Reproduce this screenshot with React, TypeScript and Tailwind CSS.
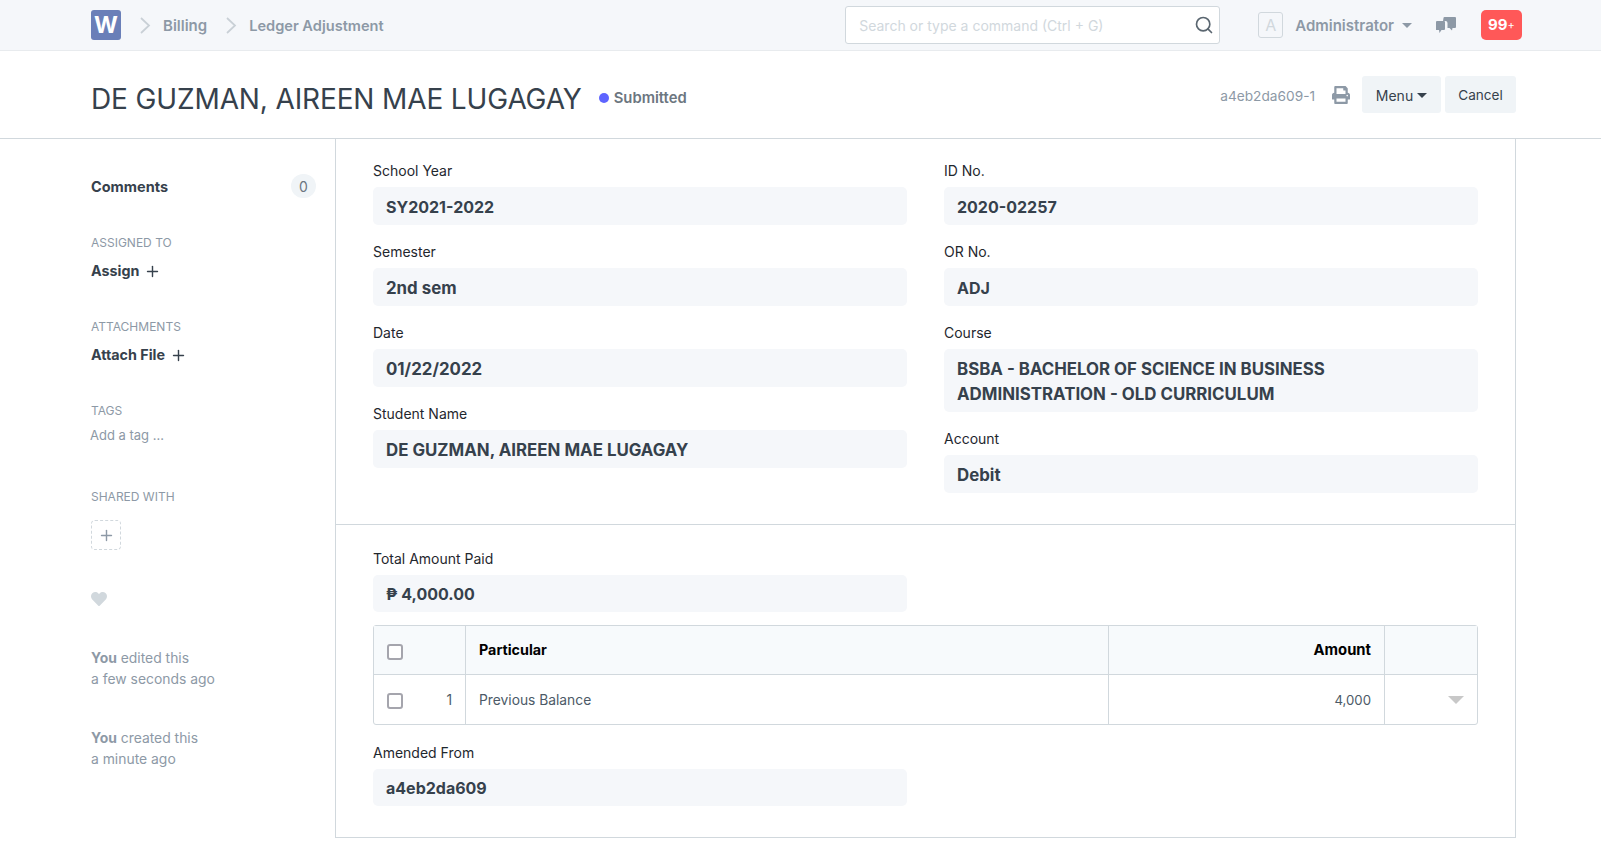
import React from 'react';
import { Search, Plus } from 'lucide-react';
import { FaPrint, FaHeart } from 'react-icons/fa';

const Field = ({ label, value, tall, long, short }: { label: string; value: React.ReactNode; tall?: boolean; long?: boolean; short?: boolean }) => (
  <div className="mb-[17px]">
    <div className="h-[20px] mb-[6px] text-[14px] leading-[20px] text-[#1f272e]">{label}</div>
    <div className={`bg-[#f5f7fa] rounded-[5px] px-[13px] font-bold text-[#36414c] ${long ? 'text-[16.85px]' : 'text-[16px]'} ${tall ? 'pt-[8px] pb-[5px] leading-[25px]' : short ? 'h-[37px] leading-[39px]' : 'h-[38px] leading-[40px]'}`}>
      {value}
    </div>
  </div>
);

const SideLabel = ({ children }: { children: React.ReactNode }) => (
  <div className="text-[12px] leading-[16px] text-[#8d99a6]">{children}</div>
);

const Check = () => <span className="block mt-[3px] w-[16px] h-[16px] rounded-[3px] border-2 border-[#a5a5ad] bg-white" />;

const Chevron = () => (
  <svg width="11" height="17" viewBox="0 0 11 17" className="ml-[19px]" fill="none" stroke="#c9d0d6" strokeWidth="1.75">
    <path d="M1 1l8 7.5-8 7.5" />
  </svg>
);

// two square speech bubbles, the desk's chat icon
const ChatIcon = () => (
  <svg width="20" height="16" viewBox="0 0 20 16" className="ml-[24px]" fill="#8d99a6">
    <path d="M7.5 1a1 1 0 0 1 1-1h10.5a1 1 0 0 1 1 1v9a1 1 0 0 1-1 1h-2.5l-.5 2.5-2.5-2.5h-2v-5a2 2 0 0 0-2-2h-2.5z" />
    <path d="M0 5a1 1 0 0 1 1-1h7a1 1 0 0 1 1 1v7a1 1 0 0 1-1 1h-2.5l-2 3-.5-3h-2.5a1 1 0 0 1-1-1z" />
  </svg>
);

export default function App() {
  return (
    <div className="min-h-[857px] bg-white font-['Inter',sans-serif] text-[#36414c]">
      {/* navbar */}
      <div className="h-[51px] bg-[#f5f7fa] border-b border-[#e8ebee] flex items-center pl-[91px] pr-[79px]">
        <div className="w-[30px] h-[30px] rounded-[3px] bg-[#6a7fb8] text-white text-[23px] font-bold flex items-center justify-center">W</div>
        <Chevron />
        <span className="ml-[12px] mt-[2px] text-[15px] font-semibold text-[#8d99a6]">Billing</span>
        <Chevron />
        <span className="ml-[12px] mt-[3px] text-[14.6px] font-semibold text-[#8d99a6]">Ledger Adjustment</span>
        <div className="ml-auto w-[375px] h-[38px] bg-white border border-[#d1d8dd] rounded-[3px] flex items-center pl-[13px] pr-[5px]">
          <span className="text-[14px] text-[#d1d8dd]">Search or type a command (Ctrl + G)</span>
          <Search size={20} className="ml-auto text-[#5a6670]" strokeWidth={2} />
        </div>
        <div className="ml-[38px] w-[25px] h-[26px] border border-[#d1d8dd] rounded-[3px] flex items-center justify-center text-[16px] text-[#d1d8dd]">A</div>
        <span className="ml-[12px] mt-[3px] text-[15px] font-semibold text-[#8d99a6]">Administrator</span>
        <span className="ml-[8px] w-0 h-0 border-x-[5px] border-x-transparent border-t-[5px] border-t-[#8d99a6]" />
        <ChatIcon />
        <div className="ml-[25px] w-[41px] h-[30px] rounded-[5px] bg-[#ff5858] text-white text-[15px] font-bold flex items-center justify-center">99<span className="text-[11px] font-normal">+</span></div>
      </div>

      {/* page head */}
      <div className="h-[88px] border-b border-[#d1d8dd] flex items-center pl-[91px] pr-[85px]">
        <h1 className="pt-[8px] text-[28px] font-normal text-[#36414c] tracking-[-0.13px]">DE GUZMAN, AIREEN MAE LUGAGAY</h1>
        <span className="ml-[17px] mt-[6px] w-[10px] h-[10px] rounded-full bg-[#5e64ff]" />
        <span className="ml-[5px] mt-[8px] text-[14.8px] font-semibold text-[#6c7680]">Submitted</span>
        <span className="ml-auto mt-[4px] text-[13.7px] text-[#8d99a6]">a4eb2da609-1</span>
        <FaPrint size={18} className="ml-[17px] text-[#8d99a6]" />
        <button className="ml-[12px] h-[37px] w-[79px] bg-[#f0f4f7] rounded-[3px] pt-[1px] text-[14px] text-[#36414c] flex items-center justify-center gap-[4px]">
          Menu <span className="w-0 h-0 border-x-[5px] border-x-transparent border-t-[5px] border-t-[#36414c]" />
        </button>
        <button className="ml-[4px] h-[37px] w-[71px] bg-[#f0f4f7] rounded-[3px] pt-[2px] text-[13.6px] text-[#36414c]">Cancel</button>
      </div>

      <div className="flex pl-[91px] pr-[85px]">
        {/* sidebar */}
        <div className="w-[244px] shrink-0 pr-[19px] pt-[35px]">
          <div className="flex items-center justify-between h-[24px]">
            <span className="mt-[2px] text-[14.5px] font-bold text-[#36414c]">Comments</span>
            <span className="w-[25px] h-[24px] rounded-full bg-[#f0f4f7] text-[14px] text-[#6c7680] flex items-center justify-center">0</span>
          </div>
          <div className="mt-[37px]"><SideLabel>ASSIGNED TO</SideLabel></div>
          <div className="mt-[10px] flex items-center gap-[5px] text-[14.3px] font-bold leading-[20px]">Assign <Plus size={17} strokeWidth={2} /></div>
          <div className="mt-[38px]"><SideLabel>ATTACHMENTS</SideLabel></div>
          <div className="mt-[10px] flex items-center gap-[5px] text-[14.3px] font-bold leading-[20px]">Attach File <Plus size={17} strokeWidth={2} /></div>
          <div className="mt-[38px]"><SideLabel>TAGS</SideLabel></div>
          <div className="mt-[7px] -ml-[1px] text-[13px] leading-[18px] text-[#8d99a6]">Add a tag ...</div>
          <div className="mt-[45px]"><SideLabel>SHARED WITH</SideLabel></div>
          <div className="mt-[15px] w-[30px] h-[30px] border border-dashed border-[#d1d8dd] rounded-[4px] flex items-center justify-center text-[#8d99a6]"><Plus size={17} strokeWidth={2} /></div>
          <FaHeart size={16} className="mt-[41px] text-[#d1d8dd]" />
          <div className="mt-[41px] text-[13.9px] leading-[21px] text-[#8d99a6]"><b className="font-bold">You</b> edited this<br />a few seconds ago</div>
          <div className="mt-[38px] text-[13.9px] leading-[21px] text-[#8d99a6]"><b className="font-bold">You</b> created this<br />a minute ago</div>
        </div>

        {/* form */}
        <div className="flex-1 border-x border-b border-[#d1d8dd] h-[699px]">
          <div className="grid grid-cols-2 gap-x-[37px] px-[37px] pt-[22px] h-[386px] border-b border-[#d1d8dd]">
            <div>
              <Field label="School Year" value="SY2021-2022" />
              <Field label="Semester" long value="2nd sem" />
              <Field label="Date" long value="01/22/2022" />
              <Field label="Student Name" long value="DE GUZMAN, AIREEN MAE LUGAGAY" />
            </div>
            <div>
              <Field label="ID No." value="2020-02257" />
              <Field label="OR No." value="ADJ" />
              <Field label="Course" tall long value={<>BSBA - BACHELOR OF SCIENCE IN BUSINESS<br />ADMINISTRATION - OLD CURRICULUM</>} />
              <Field label="Account" long value="Debit" />
            </div>
          </div>
          <div className="px-[37px] pt-[24px]">
            <div className="w-[534px]">
              <Field label="Total Amount Paid" short value="₱ 4,000.00" />
            </div>
            <div className="-mt-[4px] border border-[#d1d8dd] rounded-[3px] text-[14px]">
              <div className="flex h-[49px] bg-[#f7fafc] border-b border-[#d1d8dd] font-bold text-black text-[14.3px]">
                <div className="w-[92px] border-r border-[#d1d8dd] flex items-center pl-[13px]"><Check /></div>
                <div className="flex-1 border-r border-[#d1d8dd] flex items-center pl-[13px]">Particular</div>
                <div className="w-[276px] border-r border-[#d1d8dd] flex items-center justify-end pr-[13px] text-[14.8px]">Amount</div>
                <div className="w-[92px]" />
              </div>
              <div className="flex h-[49px] text-[#4c5a67] text-[13.8px]">
                <div className="w-[92px] border-r border-[#d1d8dd] flex items-center justify-between pl-[13px] pr-[13px]"><Check /><span className="mt-[2px]">1</span></div>
                <div className="flex-1 border-r border-[#d1d8dd] flex items-center pl-[13px]"><span className="mt-[2px]">Previous Balance</span></div>
                <div className="w-[276px] border-r border-[#d1d8dd] flex items-center justify-end pr-[13px] text-[13.2px]"><span className="mt-[2px]">4,000</span></div>
                <div className="w-[92px] flex items-center justify-end pr-[13px]"><span className="w-0 h-0 border-x-[8px] border-x-transparent border-t-[8px] border-t-[#c8c8c8]" /></div>
              </div>
            </div>
            <div className="w-[534px] mt-[18px]">
              <Field label="Amended From" short value="a4eb2da609" />
            </div>
          </div>
        </div>
      </div>
    </div>
  );
}
